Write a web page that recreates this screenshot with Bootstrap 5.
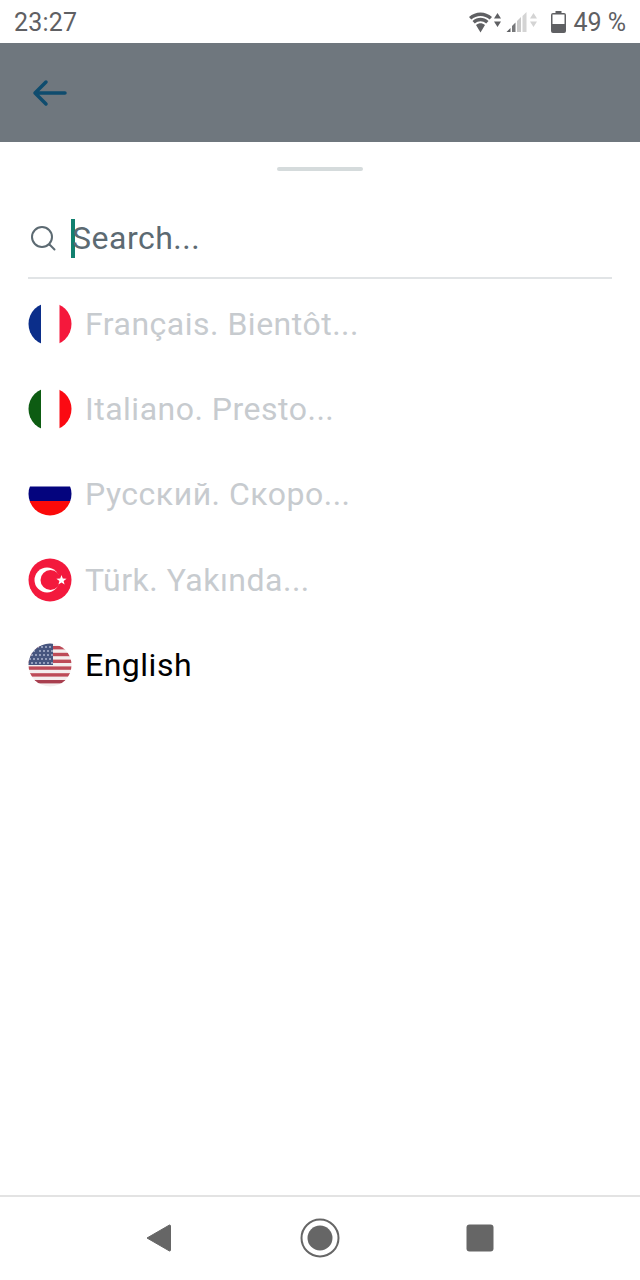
<!DOCTYPE html>
<html lang="en">
<head>
    <meta charset="UTF-8">
    <meta name="viewport" content="width=device-width, initial-scale=1.0">
    <title>Language</title>
    <link href="https://cdn.jsdelivr.net/npm/bootstrap@5.3.0/dist/css/bootstrap.min.css" rel="stylesheet">
    <style>
        body {
            background-color: #fff;
            font-family: Roboto, "Liberation Sans", sans-serif;
        }
        .phone {
            width: 640px;
            height: 1280px;
            overflow: hidden;
        }
        .status-bar {
            height: 43px;
            padding: 1px 14px 0 14px;
            color: #5f6063;
            font-size: 25px;
            letter-spacing: .2px;
            line-height: 43px;
        }
        .status-icons { letter-spacing: 0; }
        .status-icons svg { display: block; }
        .status-wifi { margin-right: 5px; }
        .status-signal { margin-right: 14px; }
        .status-battery { margin-right: 7px; }
        .top-bar {
            height: 99px;
            background-color: #6f777e;
            padding-left: 32px;
        }
        .sheet { min-height: 0; }
        .sheet-handle {
            width: 86px;
            height: 4px;
            margin: 25px auto 0;
            border-radius: 2px;
            background-color: #d5dbdc;
        }
        .search-row {
            margin: 38px 28px 0;
            height: 70px;
            padding: 0 0 10px 2px;
            border-bottom: 2px solid #e1e4e6;
        }
        .search-caret {
            width: 4px;
            height: 39px;
            margin-left: 15px;
            background-color: #12806f;
            flex: none;
        }
        .search-input {
            margin-left: -3px;
            border: 0;
            outline: 0;
            padding: 0;
            width: 400px;
            background: transparent;
            font: 32px Roboto, sans-serif;
            letter-spacing: .5px;
            color: #5c6a72;
        }
        .search-input::placeholder { color: #5c6a72; opacity: 1; }
        .lang-list { margin-top: 2px; }
        .lang-row {
            height: 85.3px;
            padding: 0 28px;
            gap: 14px;
            font-size: 32px;
            letter-spacing: .5px;
            color: #c7cbcf;
        }
        .lang-row span { margin-left: -1px; }
        .lang-row.is-ready { color: #000; }
        .flag { flex: none; display: block; }
        .nav-bar {
            height: 85px;
            border-top: 2px solid #e3e3e3;
            padding: 0 2px 2px 0;
        }
        .nav-home { margin-left: 128px; }
        .nav-recent { margin-left: 126px; }
    </style>
</head>
<body>
    <div class="phone d-flex flex-column">
        <div class="status-bar d-flex justify-content-between">
            <span>23:27</span>
            <div class="status-icons d-flex align-items-center">
                <svg class="status-wifi" width="32" height="22" viewBox="0 0 32 22" fill="#5f6063">
                    <path d="M0 6C6.500 0 16.500 0 23 6l-2.300 2.600C15.500 3.800 7.500 3.800 2.300 8.600z"/>
                    <path d="M3.500 10C8.500 5.800 14.500 5.800 19.500 10l-2.300 2.600C13.500 9.500 9.500 9.500 5.800 12.600z"/>
                    <path d="M7 14c3-2.400 6-2.400 9 0l-4.500 7.500z"/>
                    <path d="M28.500 2l3.500 5.500h-7zM28.500 16l3.500-5.500h-7z"/>
                </svg>
                <svg class="status-signal" width="31" height="22" viewBox="0 0 31 22">
                    <path d="M0.500 21l4-4v4z" fill="#5f6063"/>
                    <path d="M6 21v-6l3.500-3.500V21z" fill="#77787a"/>
                    <path d="M11 21V10l4-4v15z" fill="#c9c9c9"/>
                    <path d="M16.500 21V5l4-4v20z" fill="#d4d4d4"/>
                    <path d="M27.500 2l3.500 5.500h-7zM27.500 16l3.500-5.500h-7z" fill="#d4d4d4"/>
                </svg>
                <svg class="status-battery" width="15" height="22" viewBox="0 0 15 22">
                    <path d="M4.500 0h6v2H13a2 2 0 0 1 2 2v16a2 2 0 0 1-2 2H2a2 2 0 0 1-2-2V4a2 2 0 0 1 2-2h2.500z" fill="#5f6063"/>
                    <rect x="1.500" y="3.500" width="12" height="9.500" fill="#fff"/>
                </svg>
                <span>49 %</span>
            </div>
        </div>

        <div class="top-bar d-flex align-items-center">
            <svg width="36" height="28" viewBox="0 0 36 28" fill="none" stroke="#0f4c6e" stroke-width="3.500" stroke-linecap="round" stroke-linejoin="round">
                <path d="M3 14h30M14 3L3 14l11 11"/>
            </svg>
        </div>

        <div class="sheet flex-grow-1">
            <div class="sheet-handle"></div>
            <div class="search-row d-flex align-items-center">
                <svg width="26" height="26" viewBox="0 0 26 26" fill="none" stroke="#5c6a72" stroke-width="2" stroke-linecap="round">
                    <circle cx="12" cy="12" r="10"/>
                    <path d="M19.500 19.500L24.500 24.500"/>
                </svg>
                <div class="search-caret"></div>
                <input class="search-input" type="text" placeholder="Search...">
            </div>

            <div class="lang-list">
                <div class="lang-row d-flex align-items-center">
                    <svg class="flag" width="44" height="44" viewBox="0 0 44 44">
                        <clipPath id="cf"><circle cx="22" cy="22" r="21.500"/></clipPath>
                        <g clip-path="url(#cf)">
                            <rect width="13" height="44" x="0" fill="#0b2e8a"/>
                            <rect width="18.500" height="44" x="13" fill="#fff"/>
                            <rect width="13" height="44" x="31.500" fill="#f5183c"/>
                        </g>
                    </svg>
                    <span>Français. Bientôt...</span>
                </div>
                <div class="lang-row d-flex align-items-center">
                    <svg class="flag" width="44" height="44" viewBox="0 0 44 44">
                        <clipPath id="ci"><circle cx="22" cy="22" r="21.500"/></clipPath>
                        <g clip-path="url(#ci)">
                            <rect width="13" height="44" x="0" fill="#0d5c12"/>
                            <rect width="18.500" height="44" x="13" fill="#fff"/>
                            <rect width="13" height="44" x="31.500" fill="#fb0a12"/>
                        </g>
                    </svg>
                    <span>Italiano. Presto...</span>
                </div>
                <div class="lang-row d-flex align-items-center">
                    <svg class="flag" width="44" height="44" viewBox="0 0 44 44">
                        <clipPath id="cr"><circle cx="22" cy="22" r="21.500"/></clipPath>
                        <g clip-path="url(#cr)">
                            <rect width="44" height="14.500" y="0" fill="#fff"/>
                            <rect width="44" height="14.500" y="14.500" fill="#04047e"/>
                            <rect width="44" height="15" y="29" fill="#fb0a0a"/>
                        </g>
                    </svg>
                    <span>Русский. Скоро...</span>
                </div>
                <div class="lang-row d-flex align-items-center">
                    <svg class="flag" width="44" height="44" viewBox="0 0 44 44">
                        <circle cx="22" cy="22" r="21.500" fill="#f3193d"/>
                        <circle cx="19" cy="22" r="12.500" fill="#fff"/>
                        <circle cx="22.500" cy="22" r="10" fill="#f3193d"/>
                        <path d="M33.500 17l1.300 3.500 3.800.2-3 2.300 1 3.600-3.100-2.100-3.100 2.100 1-3.600-3-2.300 3.800-.2z" fill="#fff"/>
                    </svg>
                    <span>Türk. Yakında...</span>
                </div>
                <div class="lang-row is-ready d-flex align-items-center">
                    <svg class="flag" width="44" height="44" viewBox="0 0 44 44">
                        <clipPath id="cu"><circle cx="22" cy="22" r="21.500"/></clipPath>
                        <g clip-path="url(#cu)">
                            <rect width="44" height="44" fill="#f4eeee"/>
                            <rect y="3" width="44" height="3.400" fill="#bd4b58"/>
                            <rect y="9.800" width="44" height="3.400" fill="#bd4b58"/>
                            <rect y="16.600" width="44" height="3.400" fill="#bd4b58"/>
                            <rect y="23.400" width="44" height="3.400" fill="#bd4b58"/>
                            <rect y="30.200" width="44" height="3.400" fill="#bd4b58"/>
                            <rect y="37" width="44" height="3.400" fill="#a93f4f"/>
                            <rect width="25" height="22" fill="#46557f"/>
                            <g fill="#aeb6cf">
                                <circle cx="6" cy="8" r="1"/><circle cx="10" cy="4" r="1"/><circle cx="14" cy="4" r="1"/><circle cx="18" cy="4" r="1"/><circle cx="22" cy="4" r="1"/>
                                <circle cx="4" cy="12" r="1"/><circle cx="8" cy="12" r="1"/><circle cx="12" cy="8" r="1"/><circle cx="16" cy="8" r="1"/><circle cx="20" cy="8" r="1"/><circle cx="24" cy="8" r="1"/>
                                <circle cx="12" cy="12" r="1"/><circle cx="16" cy="12" r="1"/><circle cx="20" cy="12" r="1"/><circle cx="24" cy="12" r="1"/>
                                <circle cx="2" cy="16" r="1"/><circle cx="6" cy="16" r="1"/><circle cx="10" cy="16" r="1"/><circle cx="14" cy="16" r="1"/><circle cx="18" cy="16" r="1"/><circle cx="22" cy="16" r="1"/>
                                <circle cx="4" cy="20" r="1"/><circle cx="8" cy="20" r="1"/><circle cx="12" cy="20" r="1"/><circle cx="16" cy="20" r="1"/><circle cx="20" cy="20" r="1"/><circle cx="24" cy="20" r="1"/>
                            </g>
                        </g>
                    </svg>
                    <span>English</span>
                </div>
            </div>
        </div>

        <div class="nav-bar d-flex align-items-center justify-content-center">
            <div class="d-flex align-items-center">
                <svg width="27" height="30" viewBox="0 0 27 30">
                    <path d="M24.500 2L2 15l22.500 13a1 1 0 0 0 1-1V3a1 1 0 0 0-1-1z" fill="#666" stroke="#666" stroke-linejoin="round"/>
                </svg>
                <svg class="nav-home" width="40" height="40" viewBox="0 0 40 40">
                    <circle cx="20" cy="20" r="18.500" fill="none" stroke="#666" stroke-width="2"/>
                    <circle cx="20" cy="20" r="12.500" fill="#666"/>
                </svg>
                <svg class="nav-recent" width="28" height="28" viewBox="0 0 28 28">
                    <rect x="0.500" y="0.500" width="27" height="27" rx="3" fill="#666"/>
                </svg>
            </div>
        </div>
    </div>

    <script src="https://cdn.jsdelivr.net/npm/bootstrap@5.3.0/dist/js/bootstrap.bundle.min.js"></script>
</body>
</html>
